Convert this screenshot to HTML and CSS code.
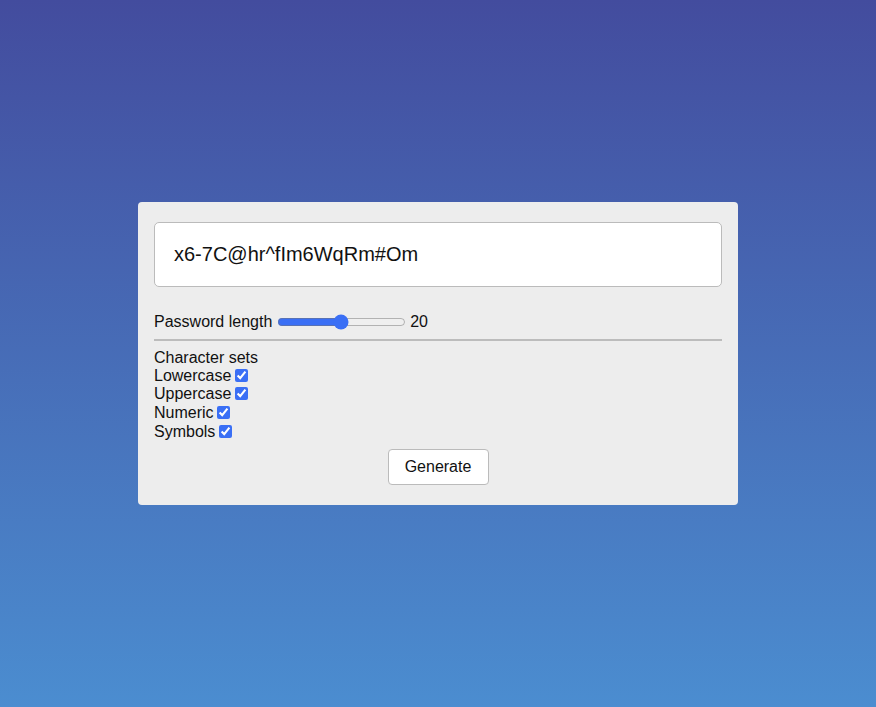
FILE: index.html
```html
<!DOCTYPE html>
<html>
<head>
<meta charset="utf-8">
<link rel="stylesheet" href="styles.css">
</head>
<body>
<div class="card">
  <div class="output">x6-7C@hr^fIm6WqRm#Om</div>
  <div class="length-row">
    <label>Password length <input type="range" min="0" max="40" value="20"> 20</label>
  </div>
  <hr class="divider">
  <div class="sets">
    <div>Character sets</div>
    <div class="set"><label>Lowercase <input type="checkbox" checked></label></div>
    <div class="set"><label>Uppercase <input type="checkbox" checked></label></div>
    <div class="set"><label>Numeric <input type="checkbox" checked></label></div>
    <div class="set"><label>Symbols <input type="checkbox" checked></label></div>
  </div>
  <div class="actions">
    <button class="generate">Generate</button>
  </div>
</div>
</body>
</html>
```
FILE: styles.css
```css
html, body {
  margin: 0;
  height: 100%;
}
body {
  font-family: "Liberation Sans", Arial, sans-serif;
  font-size: 16px;
  color: #111;
  background: linear-gradient(to bottom, #434c9e, #4b8dd0);
  display: flex;
  align-items: center;
  justify-content: center;
}
.card {
  width: 600px;
  box-sizing: border-box;
  background: #ededed;
  border-radius: 4px;
  padding: 20px 16px;
}
.output {
  background: #fff;
  border: 1px solid #bbb;
  border-radius: 5px;
  padding: 20px 19px;
  font-size: 20px;
  line-height: 23px;
}
.length-row {
  margin-top: 26px;
}
.length-row input {
  vertical-align: middle;
  accent-color: #3a6ff5;
  margin: 0;
  width: 129px;
}
.divider {
  border: none;
  border-top: 2px solid #bcbcbc;
  margin: 8px 0 8px;
}
.set {
  line-height: 18.67px;
  height: 18.67px;
}
.sets input {
  accent-color: #3a6ff5;
  margin: 0 0 0 -1px;
  vertical-align: -1px;
}
.actions {
  display: flex;
  justify-content: center;
  margin-top: 8px;
}
.generate {
  font-family: "Liberation Sans", Arial, sans-serif;
  font-size: 16px;
  color: #111;
  background: #fff;
  border: 1px solid #bbb;
  border-radius: 4px;
  width: 101px;
  height: 36px;
  padding: 0;
}
```
